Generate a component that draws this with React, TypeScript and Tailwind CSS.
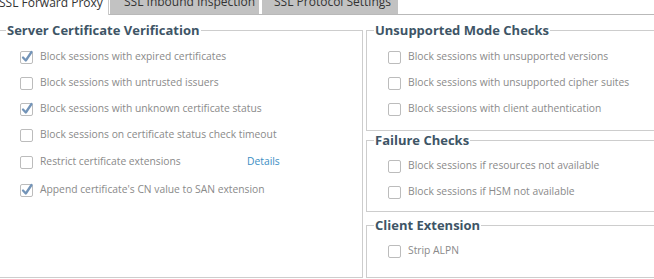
import type { ReactNode } from 'react'

const font = { fontFamily: '"Open Sans", "Noto Sans", Arial, sans-serif' }

function Box({ checked }: { checked?: boolean }) {
    return (
        <span className="relative inline-block w-[13px] h-[13px] shrink-0 border border-[#bcbcbc] rounded-[2px] bg-white">
            {checked && (
                <svg className="absolute -left-[1px] -top-[2px] overflow-visible" width="14" height="14" viewBox="0 0 14 14">
                    <path d="M3 7.5 L5.8 10.5 L11.5 2" fill="none" stroke="#7394b8" strokeWidth="2.3" strokeLinecap="round" strokeLinejoin="round" />
                </svg>
            )}
        </span>
    )
}

function Row({ label, checked, extra, className }: { label: string; checked?: boolean; extra?: ReactNode; className?: string }) {
    return (
        <div className={`h-[26px] flex items-center ${className ?? ''}`}>
            <Box checked={checked} />
            {extra ? (
                <>
                    <span className="ml-[7px] w-[207px] text-[#8a8a8a]">{label}</span>
                    {extra}
                </>
            ) : (
                <span className="ml-[7px] text-[#8a8a8a]">{label}</span>
            )}
        </div>
    )
}

// group box with its title sitting on the top border line
function Group({ title, className, bodyClass, children }: { title: string; className?: string; bodyClass?: string; children: ReactNode }) {
    return (
        <div className={`border border-[#cdcdcd] ${className ?? ''}`}>
            <div className="-mt-[9px] ml-[7px] w-fit px-[1px] bg-white text-[13px] leading-[16px] font-bold text-[#3e5566]">
                {title}
            </div>
            <div className={`pl-[21px] pr-2 ${bodyClass ?? 'pt-[6px] pb-[8px]'}`}>{children}</div>
        </div>
    )
}

export default function App() {
    return (
        <div className="w-[654px] h-[279px] overflow-hidden bg-white text-[10.3px]" style={font}>
            {/* tabs, scrolled so only their lower part shows */}
            <div className="-mt-[10px] -ml-[3px] flex h-[25px] border-b border-[#b9b9b9] w-[700px]">
                <div className="w-[112px] h-[25px] bg-white border-r border-[#c9c9c9] flex items-center pl-[2px] text-[12px] text-[#333]">
                    SSL Forward Proxy
                </div>
                <div className="ml-[1px] w-[149px] h-[24px] bg-[#c2c2c2] flex items-center pl-[14px] text-[12px] text-[#333]">
                    SSL Inbound Inspection
                </div>
                <div className="ml-[3px] w-[136px] h-[24px] bg-[#c2c2c2] flex items-center pl-[12px] text-[12px] text-[#333]">
                    SSL Protocol Settings
                </div>
            </div>

            <div className="-ml-[2px] mt-[15px] flex gap-[3px] w-[662px] h-[248px]">
                <Group title="Server Certificate Verification" className="w-[365px]">
                    <Row label="Block sessions with expired certificates" checked />
                    <Row label="Block sessions with untrusted issuers" />
                    <Row label="Block sessions with unknown certificate status" checked />
                    <Row label="Block sessions on certificate status check timeout" />
                    <Row
                        label="Restrict certificate extensions"
                        extra={<span className="text-[#3b8ec4]">Details</span>}
                        className="mt-[1px]"
                    />
                    <Row label="Append certificate's CN value to SAN extension" checked className="mt-[2px]" />
                </Group>

                <div className="flex-1 flex flex-col">
                    <Group title="Unsupported Mode Checks">
                        <Row label="Block sessions with unsupported versions" />
                        <Row label="Block sessions with unsupported cipher suites" />
                        <Row label="Block sessions with client authentication" />
                    </Group>
                    <Group title="Failure Checks" className="mt-[9px]" bodyClass="pt-[5px] pb-[6px]">
                        <Row label="Block sessions if resources not available" />
                        <Row label="Block sessions if HSM not available" />
                    </Group>
                    <Group title="Client Extension" className="mt-[13px] flex-1" bodyClass="pt-[5px]">
                        <Row label="Strip ALPN" />
                    </Group>
                </div>
            </div>
        </div>
    )
}
